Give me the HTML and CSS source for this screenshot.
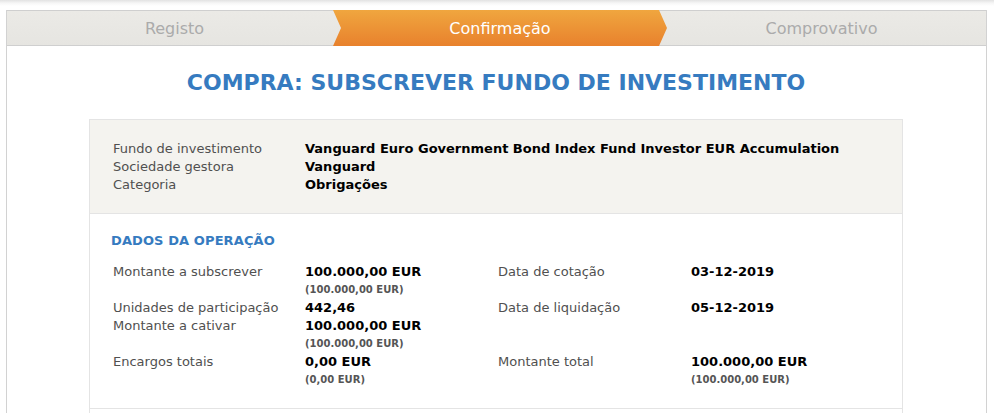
FILE: index.html
```html
<!DOCTYPE html>
<html lang="pt">
<head>
<meta charset="utf-8">
<title>Compra: Subscrever Fundo de Investimento</title>
<link rel="stylesheet" href="styles.css">
</head>
<body>
<div class="frame">
  <div class="stepper">
    <div class="step step-first">Registo</div>
    <div class="step step-active">Confirmação</div>
    <div class="step step-last">Comprovativo</div>
  </div>
  <div class="content">
    <h1 class="title">COMPRA: SUBSCREVER FUNDO DE INVESTIMENTO</h1>
    <div class="card">
      <div class="card-head">
        <div class="head-grid">
          <div class="lbl">Fundo de investimento</div>
          <div class="val">Vanguard Euro Government Bond Index Fund Investor EUR Accumulation</div>
          <div class="lbl">Sociedade gestora</div>
          <div class="val">Vanguard</div>
          <div class="lbl">Categoria</div>
          <div class="val">Obrigações</div>
        </div>
      </div>
      <div class="card-section">
        <h2 class="section-title">DADOS DA OPERAÇÃO</h2>
        <div class="data-grid">
          <div class="lbl">Montante a subscrever</div>
          <div><div class="val">100.000,00 EUR</div><div class="sub">(100.000,00 EUR)</div></div>
          <div class="lbl">Data de cotação</div>
          <div class="val">03-12-2019</div>

          <div class="lbl">Unidades de participação</div>
          <div class="val">442,46</div>
          <div class="lbl">Data de liquidação</div>
          <div class="val">05-12-2019</div>

          <div class="lbl">Montante a cativar</div>
          <div><div class="val">100.000,00 EUR</div><div class="sub">(100.000,00 EUR)</div></div>
          <div></div>
          <div></div>

          <div class="lbl">Encargos totais</div>
          <div><div class="val">0,00 EUR</div><div class="sub">(0,00 EUR)</div></div>
          <div class="lbl">Montante total</div>
          <div><div class="val">100.000,00 EUR</div><div class="sub">(100.000,00 EUR)</div></div>
        </div>
      </div>
      <div class="card-section card-more"></div>
    </div>
  </div>
</div>
</body>
</html>
```
FILE: styles.css
```css
html, body {
  margin: 0;
  padding: 0;
}
body {
  font-family: "DejaVu Sans", Verdana, sans-serif;
  background: #fff linear-gradient(to bottom, #e2e2e2 0, #f6f6f6 3px, #fff 6px) no-repeat;
  background-size: 100% 6px;
  overflow: hidden;
  height: 413px;
}
.frame {
  margin: 10px 0 0 6px;
  width: 979px;
  border-left: 1px solid #d2d2d2;
  border-right: 1px solid #d2d2d2;
  min-height: 420px;
}
.stepper {
  display: flex;
  height: 34px;
  border-top: 1px solid #cfcfcf;
  border-bottom: 1px solid #cfcfcf;
  background: linear-gradient(to bottom, #ebeae6, #e6e5e1);
}
.step {
  display: flex;
  align-items: center;
  justify-content: center;
  font-size: 16px;
  color: #ababab;
}
.step-first {
  flex: 0 0 326px;
  padding-left: 9px;
  box-sizing: border-box;
}
.step-active {
  flex: 0 0 334px;
  margin-top: -1px;
  margin-bottom: -1px;
  color: #fff;
  background: linear-gradient(to bottom, #f0a63f, #e8812d);
  clip-path: polygon(0 0, 326px 0, 334px 50%, 326px 100%, 0 100%, 8px 50%);
  box-sizing: border-box;
  position: relative;
  z-index: 1;
}
.step-last {
  flex: 1;
  margin-left: -8px;
  padding-right: 2px;
}
.content {
  padding: 24px 1px 0 0;
}
.title {
  margin: 0 0 24px;
  text-align: center;
  font-size: 22px;
  line-height: 25px;
  font-weight: bold;
  color: #367bc0;
}
.card {
  width: 812px;
  margin: 0 auto;
  border: 1px solid #e4e4e4;
  border-bottom: none;
}
.card-head {
  background: #f4f3ef;
  padding: 20px 23px 19px;
  border-bottom: 1px solid #e4e4e4;
}
.head-grid {
  display: grid;
  grid-template-columns: 192px auto;
  line-height: 18px;
  font-size: 13px;
}
.lbl {
  color: #505050;
  font-size: 13px;
  line-height: 18px;
}
.val {
  color: #000;
  font-weight: bold;
  font-size: 13px;
  line-height: 18px;
}
.sub {
  color: #555;
  font-weight: bold;
  font-size: 10px;
  line-height: 18px;
}
.card-section {
  padding: 18px 23px 19px 21px;
  border-bottom: 1px solid #e4e4e4;
}
.section-title {
  margin: 0 0 13px;
  font-size: 13px;
  line-height: 18px;
  font-weight: bold;
  color: #367bc0;
  letter-spacing: 0.1px;
}
.data-grid {
  display: grid;
  grid-template-columns: 192px 193px 193px auto;
  padding-left: 2px;
}
.card-more {
  height: 40px;
  border-bottom: none;
}
```
